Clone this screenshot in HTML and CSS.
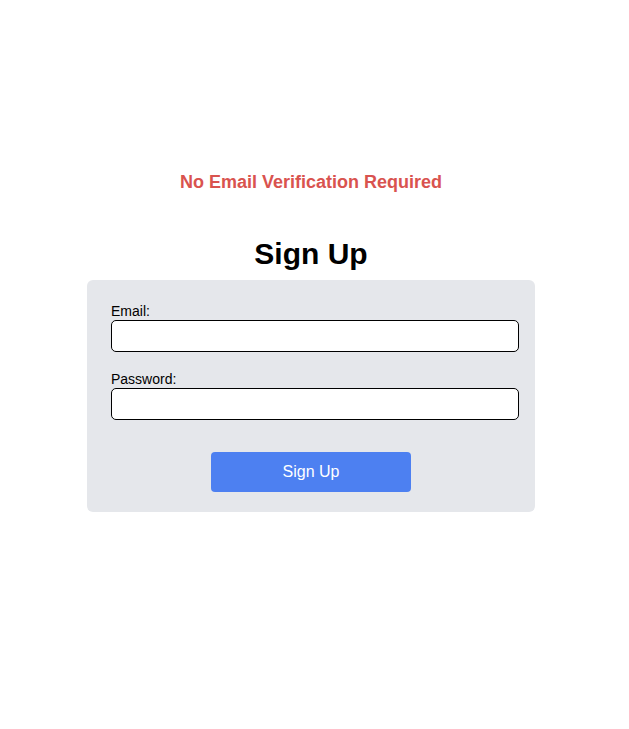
FILE: index.html
```html
<!DOCTYPE html>
<html>
<head>
<meta charset="utf-8">
<link rel="stylesheet" href="styles.css">
</head>
<body>
<main class="page">
  <p class="notice">No Email Verification Required</p>
  <h1 class="title">Sign Up</h1>
  <form class="card">
    <div class="field">
      <label class="label" for="email">Email:</label>
      <input class="input" id="email" type="email">
    </div>
    <div class="field">
      <label class="label" for="password">Password:</label>
      <input class="input" id="password" type="password">
    </div>
    <div class="actions">
      <button class="button" type="button">Sign Up</button>
    </div>
  </form>
</main>
</body>
</html>
```
FILE: styles.css
```css
html, body {
  margin: 0;
  padding: 0;
  background: #ffffff;
}
body {
  font-family: "Liberation Sans", Arial, sans-serif;
  color: #000;
}
.page {
  display: flex;
  flex-direction: column;
  align-items: center;
  padding: 170px 7px 0 0;
}
.notice {
  margin: 0;
  color: #d9534f;
  font-size: 18px;
  font-weight: bold;
  line-height: 24px;
}
.title {
  margin: 43px 0 9px;
  font-size: 30px;
  font-weight: bold;
  line-height: 34px;
}
.card {
  width: 448px;
  box-sizing: border-box;
  background: #e5e7eb;
  border-radius: 6px;
  padding: 24px 16px 20px 24px;
}
.field {
  display: flex;
  flex-direction: column;
  margin-bottom: 20px;
}
.label {
  font-size: 14px;
  line-height: 14px;
  margin-bottom: 2px;
}
.input {
  box-sizing: border-box;
  width: 408px;
  height: 32px;
  margin: 0;
  border: 1px solid #000;
  border-radius: 5px;
  background: #fff;
  font-family: inherit;
  font-size: 14px;
  padding: 4px 8px;
}
.actions {
  display: flex;
  justify-content: center;
  padding-top: 12px;
  padding-right: 8px;
}
.button {
  width: 200px;
  height: 40px;
  border: none;
  border-radius: 4px;
  background: #4d80f1;
  color: #fff;
  font-family: inherit;
  font-size: 16px;
  cursor: pointer;
}
```
